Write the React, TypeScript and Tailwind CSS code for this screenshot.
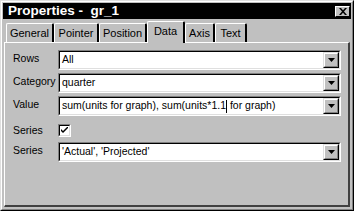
import React from "react";

const font = { fontFamily: '"Liberation Sans", Arial, sans-serif' };

function Dropdown({ children }: { children: React.ReactNode }) {
  return (
    <div className="flex h-[20px] w-[283px] border-t border-l border-t-[#808080] border-l-[#808080] border-r border-b border-r-white border-b-white">
      <div className="flex flex-1 border-t border-l border-t-black border-l-black border-r border-b border-r-[#dfdfdf] border-b-[#dfdfdf] bg-white">
        <div className="flex-1 flex items-center pl-[2px] text-[10.5px] text-black whitespace-nowrap overflow-hidden">
          {children}
        </div>
        <div className="w-[16px] h-full border-t border-l border-t-[#dfdfdf] border-l-[#dfdfdf] border-r border-b border-r-black border-b-black bg-[#c0c0c0]">
          <div className="w-full h-full flex items-center justify-center border-t border-l border-t-white border-l-white border-r border-b border-r-[#808080] border-b-[#808080]">
            <svg width="7" height="4" viewBox="0 0 7 4">
              <path d="M0 0h7L3.5 4z" fill="black" />
            </svg>
          </div>
        </div>
      </div>
    </div>
  );
}

function Tab({ label, w, active = false }: { label: string; w: string; active?: boolean }) {
  return (
    <div
      className={
        "flex items-center justify-center border-t border-l border-t-white border-l-white border-r-2 border-r-black rounded-t-[2px] bg-[#c0c0c0] text-[11px] text-black " +
        w +
        (active ? " h-[22px] z-10 relative mb-[-1px] pb-[2px]" : " h-[19px]")
      }
    >
      {label}
    </div>
  );
}

export default function App() {
  return (
    <div className="w-[354px] h-[211px] bg-[#c0c0c0]" style={font}>
      <div className="w-full h-full border-t border-l border-t-[#dfdfdf] border-l-[#dfdfdf] border-r border-b border-r-black border-b-black">
        <div className="w-full h-full flex flex-col border-t border-l border-t-white border-l-white border-r border-b border-r-[#808080] border-b-[#808080] p-[1px]">
          <div className="h-[16px] bg-black flex items-center justify-between pl-[5px] pr-[1px]">
            <span className="text-white font-bold text-[13.5px] whitespace-pre leading-none">Properties -  gr_1</span>
            <div className="w-[15px] h-[11px] bg-[#c0c0c0] border-t border-l border-t-white border-l-white border-r border-b border-r-black border-b-black flex items-center justify-center">
              <svg width="8" height="7" viewBox="0 0 8 7">
                <path d="M0 0h2l2 2.2L6 0h2L5 3.5 8 7H6L4 4.8 2 7H0l3-3.5z" fill="black" />
              </svg>
            </div>
          </div>
          <div className="flex items-end h-[23px] pl-[3px]">
            <Tab label="General" w="w-[48px]" />
            <Tab label="Pointer" w="w-[45px]" />
            <Tab label="Position" w="w-[48px]" />
            <Tab label="Data" w="w-[38px]" active />
            <Tab label="Axis" w="w-[30px]" />
            <Tab label="Text" w="w-[32px]" />
          </div>
          <div className="flex-1 mx-[1px] mb-[1px] border-t border-l border-t-white border-l-white border-r-2 border-b-2 border-r-[#404040] border-b-[#404040] pt-[7px] pl-[8px]">
            <div className="flex flex-col gap-[3px] text-[10.5px] text-black">
              <div className="flex items-start">
                <span className="w-[45px] pt-[1px]">Rows</span>
                <Dropdown>All</Dropdown>
              </div>
              <div className="flex items-start">
                <span className="w-[45px] pt-[1px]">Category</span>
                <Dropdown>quarter</Dropdown>
              </div>
              <div className="flex items-start">
                <span className="w-[45px] pt-[1px]">Value</span>
                <Dropdown>
                  sum(units for graph), sum(units*1.1
                  <span className="inline-block w-px h-[13px] bg-black" />
                  {"\u00a0"}for graph)
                </Dropdown>
              </div>
              <div className="flex items-center mt-[4px]">
                <span className="w-[45px]">Series</span>
                <div className="w-[13px] h-[13px] border-t border-l border-t-[#808080] border-l-[#808080] border-r border-b border-r-white border-b-white">
                  <div className="w-full h-full bg-white border-t border-l border-t-black border-l-black border-r border-b border-r-[#dfdfdf] border-b-[#dfdfdf] flex items-center justify-center">
                    <svg width="7" height="7" viewBox="0 0 7 7">
                      <path d="M0 2v2l2 2 5-5V-1L2 4z" fill="black" />
                    </svg>
                  </div>
                </div>
              </div>
              <div className="flex items-start">
                <span className="w-[45px] pt-[1px]">Series</span>
                <Dropdown>'Actual', 'Projected'</Dropdown>
              </div>
            </div>
          </div>
        </div>
      </div>
    </div>
  );
}
